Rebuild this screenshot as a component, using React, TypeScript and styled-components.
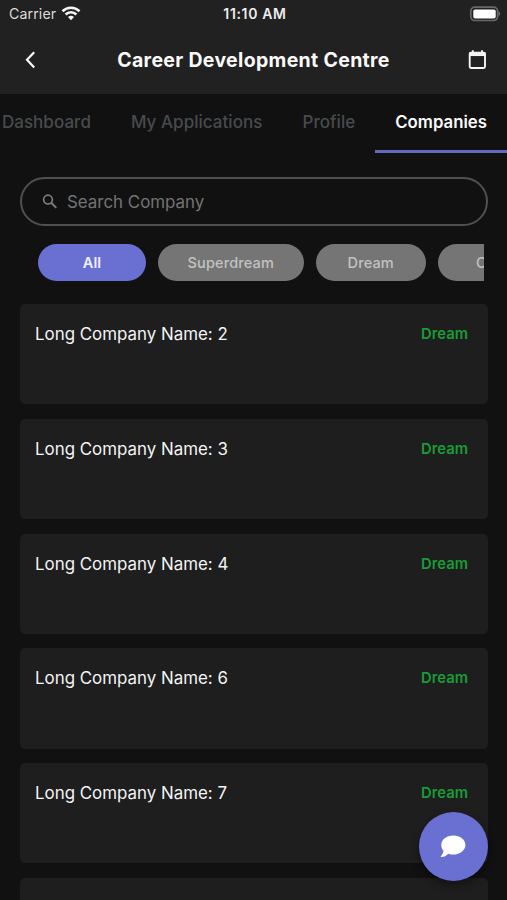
import React from 'react';
import styled, { createGlobalStyle } from 'styled-components';

const GlobalStyle = createGlobalStyle`
  * { box-sizing: border-box; }
  html, body { margin: 0; background: #111111; overflow: hidden; }
  button { border: 0; padding: 0; background: none; color: inherit; font: inherit; }
`;

const Screen = styled.div`
  position: relative;
  width: 507px;
  height: 900px;
  overflow: hidden;
  background: #111111;
  color: #f4f4f4;
  font-family: Inter, Roboto, sans-serif;
`;

const Header = styled.header`
  height: 94px;
  background: #212121;
`;

const StatusBar = styled.div`
  display: grid;
  grid-template-columns: 1fr auto 1fr;
  align-items: center;
  height: 27px;
  padding: 0 6px 0 9px;
`;

const Carrier = styled.div`
  display: flex;
  align-items: center;
  gap: 5px;
  font-size: 14.2px;
  letter-spacing: 0.1px;
  color: #dcdcdc;
`;

const Clock = styled.div`
  font-size: 14px;
  font-weight: 600;
  letter-spacing: 0.65px;
  color: #ececec;
`;

const BatteryIcon = styled.svg`
  justify-self: end;
`;

const TitleBar = styled.div`
  display: grid;
  grid-template-columns: 24px 1fr 24px;
  align-items: center;
  height: 66px;
  padding: 0 18px;
`;

const IconButton = styled.button`
  display: flex;
  align-items: center;
  justify-content: center;
  width: 24px;
  height: 24px;
`;

const Title = styled.h1`
  margin: 0;
  text-align: center;
  font-size: 19.5px;
  font-weight: 700;
  letter-spacing: 0.32px;
  color: #fafafa;
  white-space: nowrap;
`;

const Tabs = styled.nav`
  display: flex;
  justify-content: flex-end;
  height: 59px;
`;

const Tab = styled.button<{ $active?: boolean }>`
  flex: none;
  height: 59px;
  padding: 0 20px 1px;
  border-bottom: 3px solid ${(p) => (p.$active ? '#6469bd' : 'transparent')};
  color: ${(p) => (p.$active ? '#fafafa' : '#484b4d')};
  font-size: ${(p) => (p.$active ? '16.8px' : '17px')};
  font-weight: ${(p) => (p.$active ? 600 : 500)};
  letter-spacing: ${(p) => (p.$active ? '0' : '0.04px')};
  white-space: nowrap;
`;

const SearchBox = styled.label`
  display: flex;
  align-items: center;
  gap: 9px;
  height: 49px;
  margin: 24px 19px 0 20px;
  padding-left: 20px;
  border: 2px solid #505050;
  border-radius: 25px;
`;

const SearchInput = styled.input`
  flex: 1;
  min-width: 0;
  padding: 0;
  border: 0;
  outline: 0;
  background: transparent;
  color: #fafafa;
  font: 400 16.9px Inter, sans-serif;
  &::placeholder { color: #747474; opacity: 1; }
`;

const Filters = styled.div`
  display: flex;
  gap: 12px;
  margin: 18px 23px 0 38px;
  overflow: hidden;
`;

const Chip = styled.button<{ $active?: boolean; $width: number }>`
  flex: none;
  width: ${(p) => p.$width}px;
  height: 37px;
  padding-bottom: 1px;
  border-radius: 19px;
  background: ${(p) => (p.$active ? '#6970d2' : '#757575')};
  color: ${(p) => (p.$active ? '#f2f2fb' : '#c2c2c2')};
  font-size: 14.5px;
  font-weight: ${(p) => (p.$active ? 600 : 500)};
  letter-spacing: 0.15px;
`;

const CompanyList = styled.main`
  display: flex;
  flex-direction: column;
  gap: 14.5px;
  margin: 23px 19px 0 20px;
`;

const Card = styled.article`
  display: flex;
  justify-content: space-between;
  align-items: flex-start;
  flex: none;
  height: 100.3px;
  padding: 19px 20px 0 15px;
  border-radius: 5px;
  background: #1e1e1e;
  line-height: 22px;
`;

const CompanyName = styled.span`
  font-size: 16.9px;
`;

const Tier = styled.span`
  font-size: 14.8px;
  font-weight: 600;
  color: #179c37;
`;

const ChatButton = styled.button`
  position: absolute;
  right: 19.5px;
  bottom: 19.5px;
  display: flex;
  align-items: center;
  justify-content: center;
  width: 69px;
  height: 69px;
  border-radius: 50%;
  background: #6970d2;
  box-shadow: 0 4px 8px rgba(0, 0, 0, 0.4);
`;

const tabs = ['Dashboard', 'My Applications', 'Profile', 'Companies'];
const filters = [
  { label: 'All', width: 108 },
  { label: 'Superdream', width: 145.5 },
  { label: 'Dream', width: 110.5 },
  { label: 'Core', width: 110 },
];
const companies = [2, 3, 4, 6, 7];

export default function App() {
  return (
    <Screen>
      <GlobalStyle />
      <Header>
        <StatusBar>
          <Carrier>
            Carrier
            <svg width="20" height="16" viewBox="0 0 20 16" fill="none" stroke="#f5f5f5" strokeWidth="2.6">
              <path d="M1.500 5.200a12.200 12.200 0 0 1 17 0" />
              <path d="M4.600 8.500a7.600 7.600 0 0 1 10.800 0" />
              <path d="M7 11.100a4.300 4.300 0 0 1 6 0L10 14.200Z" fill="#f5f5f5" stroke="none" />
            </svg>
          </Carrier>
          <Clock>11:10 AM</Clock>
          <BatteryIcon width="32" height="16" viewBox="0 0 32 16">
            <rect x="1.8" y="1.1" width="26.8" height="13.4" rx="4" fill="none" stroke="#686868" strokeWidth="1.7" />
            <rect x="4.3" y="3.4" width="22.4" height="9.2" rx="1.8" fill="#fff" />
            <path d="M29.500 5.300c2.200.7 2.200 4.200 0 4.900Z" fill="#686868" />
          </BatteryIcon>
        </StatusBar>
        <TitleBar>
          <IconButton aria-label="Back">
            <svg width="24" height="24" viewBox="0 0 24 24" fill="none" stroke="#fafafa" strokeWidth="2.2">
              <path d="M16.200 4.200 9 11.800 16.200 19.400" />
            </svg>
          </IconButton>
          <Title>Career Development Centre</Title>
          <IconButton aria-label="Calendar">
            <svg width="24" height="24" viewBox="0 0 24 24" fill="none" stroke="#f4f4f4">
              <rect x="4.700" y="4.600" width="15.300" height="15.400" rx="1.4" strokeWidth="1.9" />
              <path d="M4.400 6.100h16" strokeWidth="3.900" />
              <path d="M7.800 2.200v3M17 2.200v3" strokeWidth="1.900" />
            </svg>
          </IconButton>
        </TitleBar>
      </Header>
      <Tabs>
        {tabs.map((tab) => (
          <Tab key={tab} $active={tab === 'Companies'}>{tab}</Tab>
        ))}
      </Tabs>
      <SearchBox>
        <svg width="16" height="16" viewBox="0 0 16 16" fill="none" stroke="#7b7b7b" strokeWidth="1.7">
          <circle cx="6" cy="5.600" r="4.400" />
          <path d="m9.200 8.800 5.100 5.100" strokeWidth="2" />
        </svg>
        <SearchInput placeholder="Search Company" />
      </SearchBox>
      <Filters>
        {filters.map(({ label, width }) => (
          <Chip key={label} $active={label === 'All'} $width={width}>{label}</Chip>
        ))}
      </Filters>
      <CompanyList>
        {companies.map((id) => (
          <Card key={id}>
            <CompanyName>Long Company Name: {id}</CompanyName>
            <Tier>Dream</Tier>
          </Card>
        ))}
        <Card />
      </CompanyList>
      <ChatButton aria-label="Chat">
        <svg width="26" height="24" viewBox="0 0 26 24" fill="#fff">
          <path d="M13.300 1.600C20 1.600 25.400 5.700 25.400 11S20 20.600 13.300 20.600c-1.800 0-3.500-.3-5-.9C6.500 21.700 3.700 23.100 1.200 23c-.4 0-.6-.5-.3-.8 1.500-1.700 2.300-3.500 2.600-5.400C1.900 15.100 1.300 13.100 1.300 11 1.300 5.700 6.600 1.600 13.300 1.600Z" />
        </svg>
      </ChatButton>
    </Screen>
  );
}
